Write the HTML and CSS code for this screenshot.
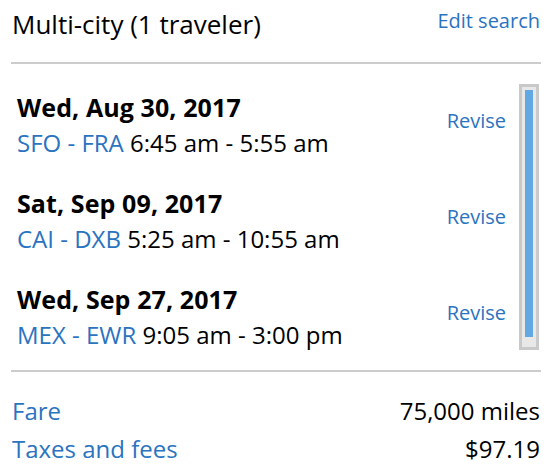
FILE: index.html
```html
<!DOCTYPE html>
<html>
<head>
<meta charset="utf-8">
<link rel="stylesheet" href="styles.css">
</head>
<body>
<div class="panel">
  <div class="header">
    <div class="title">Multi-city (1 traveler)</div>
    <a class="link edit">Edit search</a>
  </div>
  <div class="rule"></div>
  <div class="trips">
    <div class="list">
      <div class="seg">
        <div class="info">
          <div class="date">Wed, Aug 30, 2017</div>
          <div class="route"><span class="code">SFO - FRA</span> 6:45 am - 5:55 am</div>
        </div>
        <a class="link revise">Revise</a>
      </div>
      <div class="seg">
        <div class="info">
          <div class="date">Sat, Sep 09, 2017</div>
          <div class="route"><span class="code">CAI - DXB</span> 5:25 am - 10:55 am</div>
        </div>
        <a class="link revise">Revise</a>
      </div>
      <div class="seg">
        <div class="info">
          <div class="date">Wed, Sep 27, 2017</div>
          <div class="route"><span class="code">MEX - EWR</span> 9:05 am - 3:00 pm</div>
        </div>
        <a class="link revise">Revise</a>
      </div>
    </div>
    <div class="scroll"><div class="thumb"></div></div>
  </div>
  <div class="rule"></div>
  <div class="totals">
    <div class="row"><span class="label">Fare</span><span class="val">75,000 miles</span></div>
    <div class="row"><span class="label">Taxes and fees</span><span class="val">$97.19</span></div>
  </div>
</div>
</body>
</html>
```
FILE: styles.css
```css
* { box-sizing: border-box; }
html, body { margin: 0; padding: 0; background: #fff; }
body {
  font-family: "Open Sans", "Liberation Sans", sans-serif;
  color: #000;
  width: 552px;
  height: 471px;
  overflow: hidden;
}
.panel { padding: 0 11px 0 11px; }
.link { color: #2a73c0; text-decoration: none; }
.header {
  display: flex;
  justify-content: space-between;
  align-items: flex-start;
  padding: 6px 1px 0 1px;
  height: 62px;
}
.title { font-size: 26px; line-height: 36px; }
.edit { font-size: 20px; line-height: 28px; padding-top: 1px; }
.rule { height: 2px; background: #cccccc; }
.trips {
  display: flex;
  justify-content: space-between;
  margin-top: 20px;
  height: 266px;
  overflow: hidden;
  margin-bottom: 20px;
}
.list { flex: 1; padding: 5px 0 0 6px; }
.seg {
  display: flex;
  justify-content: space-between;
  align-items: flex-start;
  margin-bottom: 24px;
}
.date { font-weight: 700; font-size: 25px; line-height: 36px; letter-spacing: 0.1px; }
.route { font-size: 24px; line-height: 36px; }
.code { color: #2a73c0; }
.revise { font-size: 20px; line-height: 28px; padding-top: 18px; margin-right: 13px; }
.scroll {
  width: 20px;
  height: 266px;
  margin-right: 2px;
  background: #e8e8e8;
  border: 3px solid #c9c9c9;
  padding: 3px;
}
.thumb { width: 8px; height: 247px; background: #62a8e2; }
.totals { padding: 20px 1px 0 1px; }
.row { display: flex; justify-content: space-between; font-size: 24px; line-height: 38px; }
.label { color: #2a73c0; }
```
